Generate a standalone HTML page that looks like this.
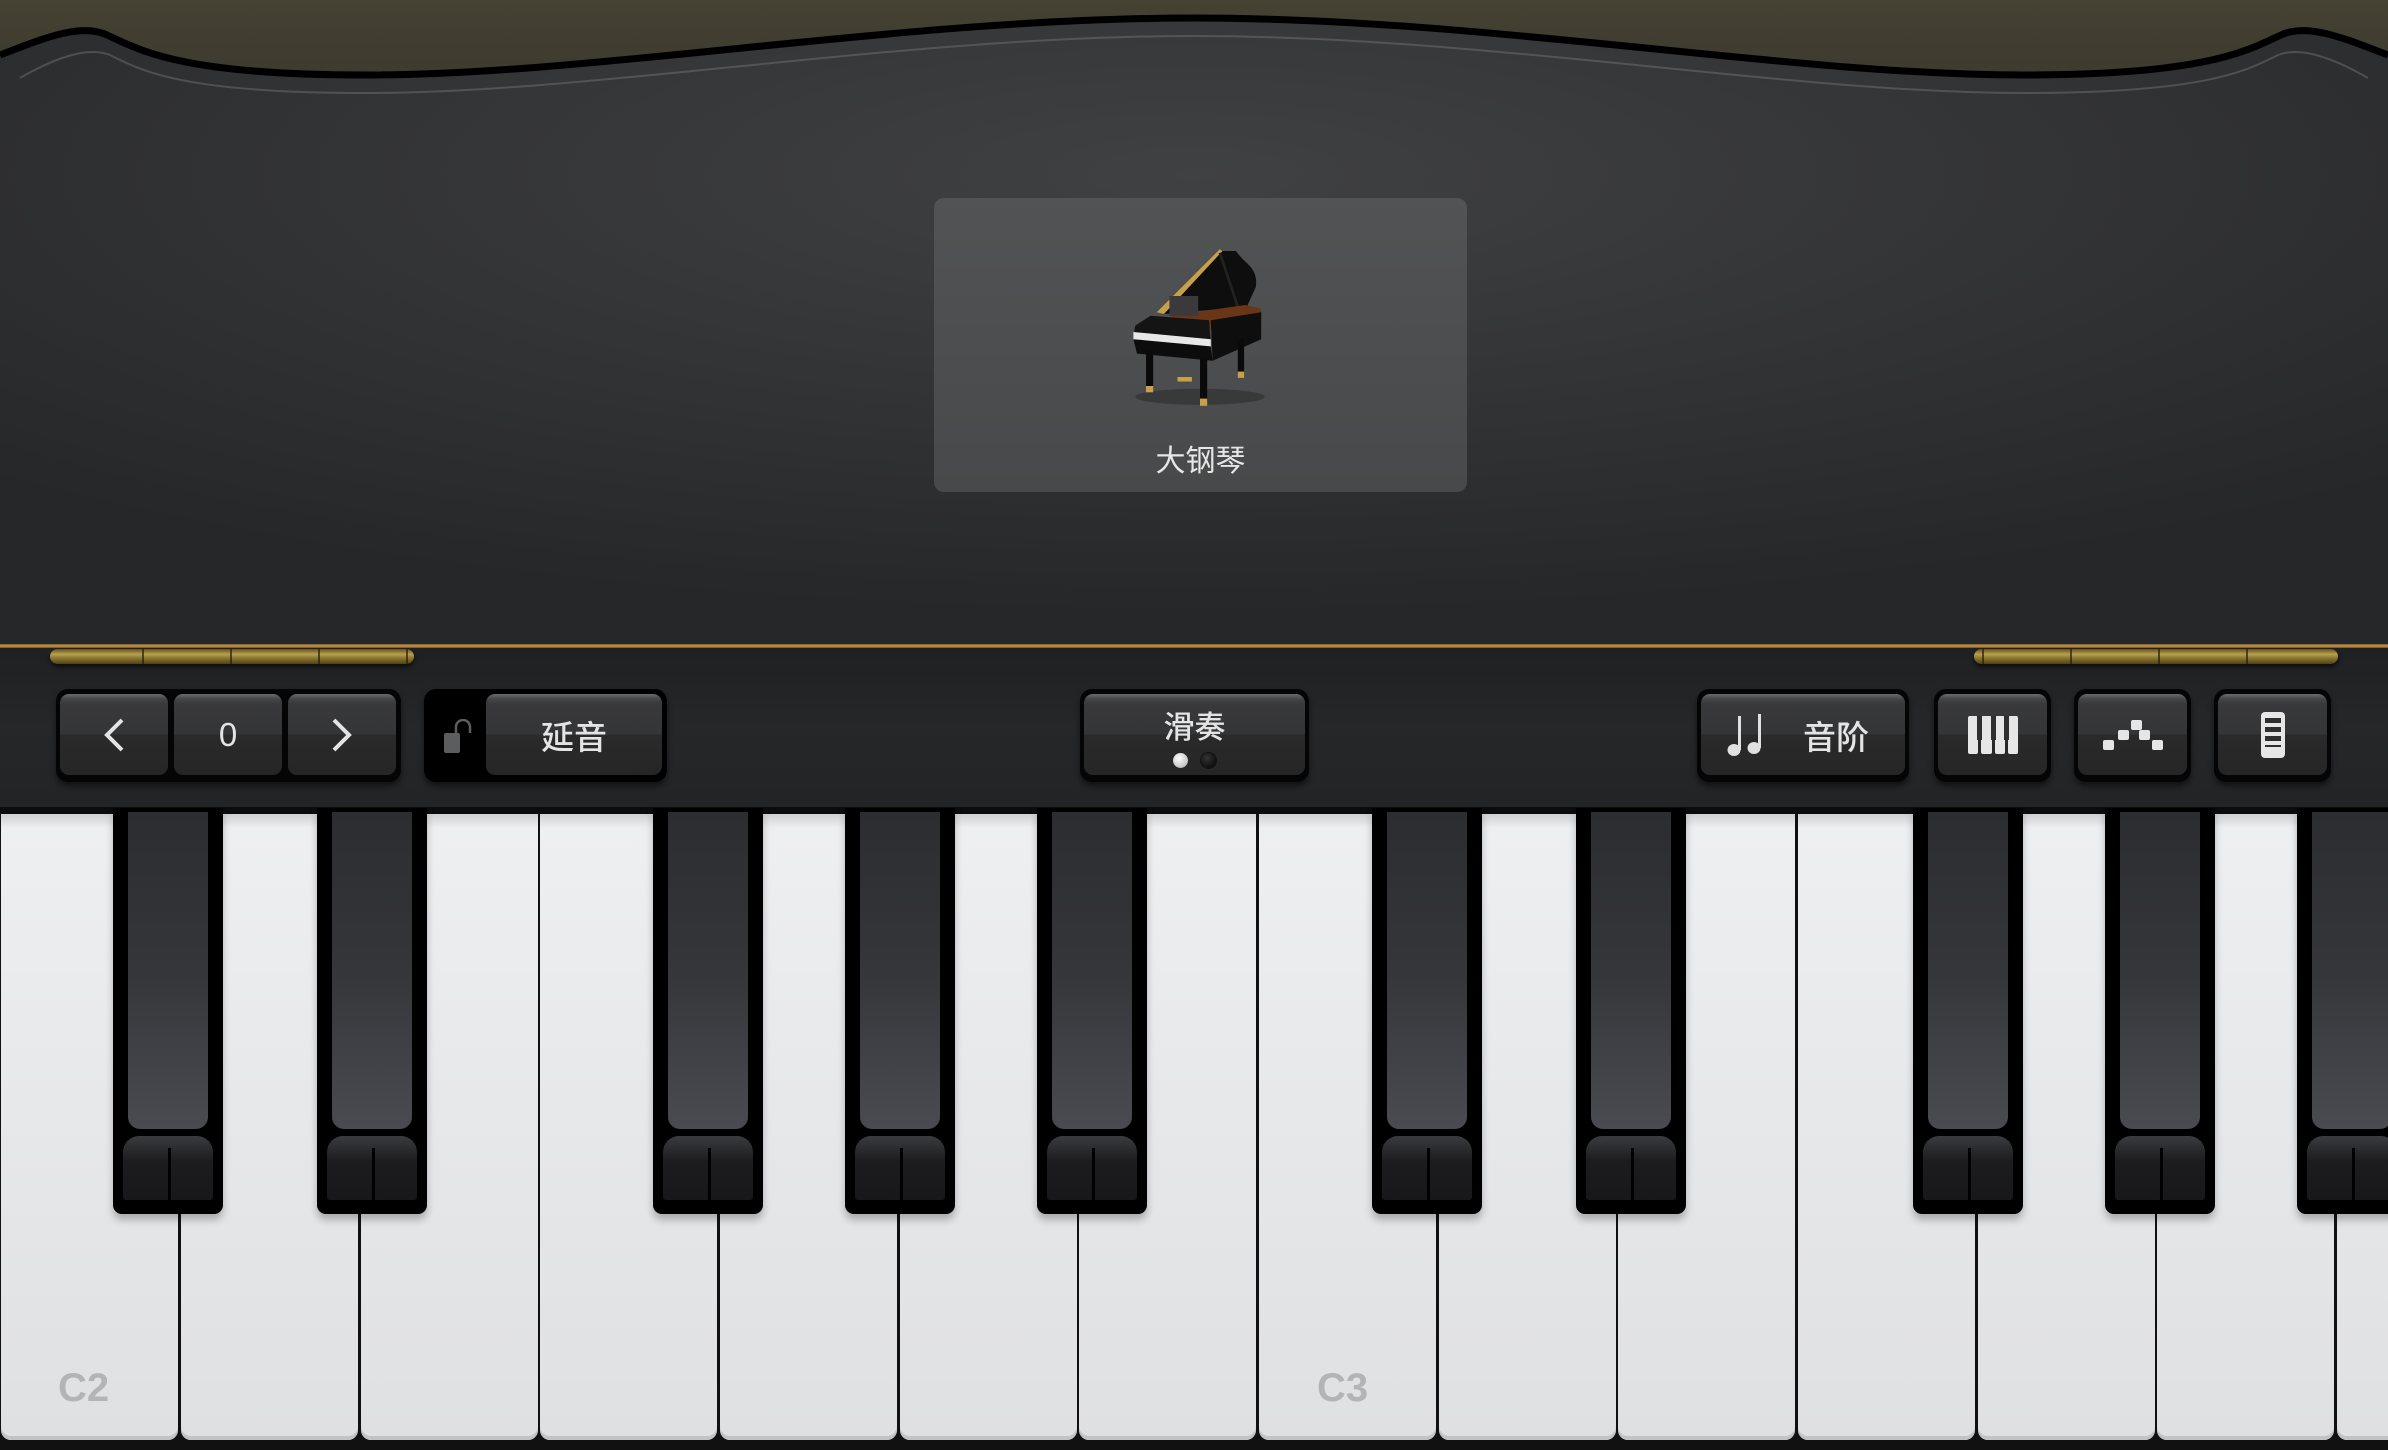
<!DOCTYPE html>
<html><head><meta charset="utf-8"><style>
*{margin:0;padding:0;box-sizing:border-box}
html,body{width:2388px;height:1450px;overflow:hidden;background:#111}
body{position:relative;font-family:"Liberation Sans","Noto Sans CJK SC",sans-serif}
.abs{position:absolute}
.card{left:934px;top:198px;width:533px;height:294px;border-radius:10px;background:linear-gradient(180deg,#525354,#48494a);}
.bar{top:807px;left:0;width:2388px;height:7px;background:#0c0c0d}
.toolbar{left:0;top:646px;width:2388px;height:161px;background:linear-gradient(180deg,#1f2022 0%,#262729 50%,#232426 100%)}
.gold{left:0;top:644px;width:2388px;height:4px;background:linear-gradient(180deg,#7a5a2a,#c99a4f,#6b4c22)}
.hinge{top:649px;height:15px;border-radius:8px;background:linear-gradient(180deg,#5f5221 0%,#b9a04e 35%,#8d7832 60%,#4d4118 100%);box-shadow:0 3px 5px rgba(0,0,0,.6)}
.hinge i{position:absolute;top:0;bottom:0;width:2px;background:rgba(40,30,10,.7)}
.grp{top:689px;height:93px;background:#050505;border-radius:12px;box-shadow:0 4px 6px rgba(0,0,0,.5)}
.btn{position:absolute;top:5px;bottom:7px;border-radius:9px;background:linear-gradient(180deg,#6a6b6c 0px,#444546 5px,#39393b 10px,#343536 50%,#2a2a2b 50%,#262627 100%);color:#e4e4e4;font-size:33px;font-weight:500;display:flex;align-items:center;justify-content:center}
.white{top:814px;width:177px;height:626px;border-radius:0 0 10px 10px;background:linear-gradient(180deg,#cfd0d2 0px,#eeeff0 14px,#e8e9eb 40%,#dfe0e2 100%);box-shadow:inset 0 -4px 0 #c2c3c5}
.black{top:808px;width:110px;height:406px;background:#000;border-radius:0 0 9px 9px;box-shadow:0 6px 8px rgba(0,0,0,.25)}
.black .f{position:absolute;left:15px;right:15px;top:4px;height:317px;border-radius:0 0 12px 12px;background:linear-gradient(180deg,#2c2d30,#35363a 50%,#4a4b50)}
.black .l{position:absolute;left:10px;right:10px;top:328px;height:64px;border-radius:16px 16px 3px 3px;background:linear-gradient(180deg,#3a3b3e,#1c1c1f 40%,#18181a)}
.black .l:after{content:"";position:absolute;left:50%;top:12px;bottom:0;width:3px;background:#000}
.lbl{top:1366px;font-size:40px;font-weight:bold;color:#b3b4b6}
</style></head><body>
<svg class="abs" style="left:0;top:0" width="2388" height="646">
<defs>
<radialGradient id="bg" cx="0.5" cy="0.25" r="0.7"><stop offset="0" stop-color="#404143"/><stop offset="1" stop-color="#262729"/></radialGradient>
<linearGradient id="ol" x1="0" y1="0" x2="0" y2="1"><stop offset="0" stop-color="#454233"/><stop offset="1" stop-color="#38362c"/></linearGradient>
</defs>
<rect width="2388" height="120" fill="url(#ol)"/>
<path d="M0,55 C40,40 80,22 107,35 C140,50 180,75 365,75 C600,75 900,18 1194,18 C1488,18 1788,75 2023,75 C2208,75 2248,50 2281,35 C2308,22 2348,40 2388,55 L2388,646 L0,646 Z" fill="url(#bg)"/>
<path d="M0,55 C40,40 80,22 107,35 C140,50 180,75 365,75 C600,75 900,18 1194,18 C1488,18 1788,75 2023,75 C2208,75 2248,50 2281,35 C2308,22 2348,40 2388,55" fill="none" stroke="#000" stroke-width="7"/>
<path d="M20,78 C60,55 90,47 110,55 C140,70 180,93 365,93 C600,93 900,36 1194,36 C1488,36 1788,93 2023,93 C2208,93 2248,70 2278,55 C2298,47 2328,55 2368,78" fill="none" stroke="#77787a" stroke-width="2" opacity=".45"/>
</svg>
<div class="abs card"></div>
<svg class="abs" style="left:1110px;top:228px" width="180" height="190" viewBox="0 0 200 200">
<ellipse cx="100" cy="182" rx="72" ry="9" fill="rgba(0,0,0,.25)"/>
<path d="M52,88 L122,18 L127,22 L60,90 Z" fill="#c9a04a"/>
<path d="M60,90 L125,20 L140,20 C150,35 165,38 162,60 L152,82 Z" fill="#0e0e0e"/>
<path d="M122,22 L148,100" stroke="#222" stroke-width="3"/>
<path d="M68,92 L150,80 L168,84 L168,100 L80,110 Z" fill="#6b3518"/>
<rect x="66" y="70" width="32" height="22" fill="#3a3a3c"/>
<path d="M45,92 L110,97 L112,123 L26,115 L28,103 Z" fill="#141414"/>
<path d="M26,110 L112,118 L112,127 L26,119 Z" fill="#e8e8e8"/>
<path d="M26,118 L112,126 L114,142 L30,134 Z" fill="#0c0c0c"/>
<path d="M112,97 L168,88 L168,118 L114,142 Z" fill="#0e0e0e"/>
<rect x="40" y="130" width="8" height="42" fill="#0a0a0a"/><rect x="40" y="170" width="8" height="7" fill="#c9a04a"/>
<rect x="100" y="140" width="8" height="46" fill="#0a0a0a"/><rect x="100" y="184" width="8" height="8" fill="#c9a04a"/>
<rect x="142" y="118" width="7" height="38" fill="#0a0a0a"/><rect x="142" y="154" width="7" height="7" fill="#c9a04a"/>
<rect x="75" y="160" width="16" height="5" fill="#c9a04a"/>
</svg>
<div class="abs" style="left:934px;top:436px;width:533px;text-align:center;color:#e6e6e6;font-size:30px">大钢琴</div>
<div class="abs toolbar"></div>
<div class="abs gold"></div>
<div class="abs hinge" style="left:50px;width:364px"><i style="left:92px"></i><i style="left:180px"></i><i style="left:268px"></i><i style="left:356px"></i></div>
<div class="abs hinge" style="left:1974px;width:364px"><i style="left:8px"></i><i style="left:96px"></i><i style="left:184px"></i><i style="left:272px"></i></div>
<div class="abs grp" style="left:56px;width:345px">
 <div class="btn" style="left:4px;width:108px"><svg width="24" height="36"><path d="M20,3 L5,18 L20,33" fill="none" stroke="#e4e4e4" stroke-width="4"/></svg></div>
 <div class="btn" style="left:118px;width:108px">0</div>
 <div class="btn" style="left:232px;width:108px"><svg width="24" height="36"><path d="M4,3 L19,18 L4,33" fill="none" stroke="#e4e4e4" stroke-width="4"/></svg></div>
</div>
<div class="abs grp" style="left:424px;width:243px;background:#000">
 <svg class="abs" style="left:18px;top:30px" width="32" height="36"><rect x="2" y="14" width="16" height="20" rx="2" fill="#5c5d5e"/><path d="M14,14 V8 A7,7 0 0 1 28,8 V14" fill="none" stroke="#5c5d5e" stroke-width="2.5"/></svg>
 <div class="btn" style="left:62px;width:176px">延音</div>
</div>
<div class="abs grp" style="left:1080px;width:229px">
 <div class="btn" style="left:4px;right:4px;flex-direction:column;justify-content:flex-start;padding-top:8px">
  <span style="font-size:31px">滑奏</span>
  <span style="display:flex;gap:13px;margin-top:6px"><i style="width:15px;height:15px;border-radius:50%;background:radial-gradient(circle at 40% 35%,#fff,#aaa)"></i><i style="width:15px;height:15px;border-radius:50%;background:radial-gradient(circle at 40% 35%,#333,#000);box-shadow:0 0 0 1px #111"></i></span>
 </div>
</div>
<div class="abs grp" style="left:1697px;width:212px">
 <div class="btn" style="left:4px;right:4px;justify-content:flex-start;padding-left:26px"><svg width="40" height="44"><g fill="#e0e0e0"><ellipse cx="7" cy="37" rx="6.5" ry="6"/><rect x="11" y="3" width="3" height="34"/><ellipse cx="27" cy="35" rx="6.5" ry="6"/><rect x="31" y="1" width="3" height="34"/></g></svg><span style="margin-left:36px">音阶</span></div>
</div>
<div class="abs grp" style="left:1934px;width:117px">
 <div class="btn" style="left:4px;right:4px"><svg width="50" height="38"><g fill="#e6e6e6"><rect x="0" y="0" width="10" height="38" rx="2"/><rect x="13" y="0" width="11" height="38" rx="2"/><rect x="27" y="0" width="10" height="38" rx="2"/><rect x="40" y="0" width="10" height="38" rx="2"/></g><g fill="#2f2f30"><rect x="9" y="0" width="5" height="24"/><rect x="23" y="0" width="5" height="24"/><rect x="36" y="0" width="5" height="24"/></g></svg></div>
</div>
<div class="abs grp" style="left:2074px;width:117px">
 <div class="btn" style="left:4px;right:4px"><svg width="60" height="30"><g fill="#e6e6e6"><rect x="0" y="20" width="11" height="10" rx="2"/><rect x="15" y="10" width="11" height="10" rx="2"/><rect x="28" y="0" width="11" height="10" rx="2"/><rect x="36" y="10" width="11" height="10" rx="2"/><rect x="49" y="20" width="11" height="10" rx="2"/></g></svg></div>
</div>
<div class="abs grp" style="left:2214px;width:117px">
 <div class="btn" style="left:4px;right:4px"><svg width="24" height="46"><rect x="0" y="0" width="24" height="46" rx="4" fill="#e6e6e6"/><g fill="#2f2f30"><rect x="4" y="6" width="16" height="5"/><rect x="4" y="15" width="16" height="5"/><rect x="4" y="24" width="16" height="5"/><rect x="4" y="33" width="16" height="2"/></g></svg></div>
</div>
<div class="abs bar"></div>
<div class="abs white" style="left:1px"></div>
<div class="abs white" style="left:181px"></div>
<div class="abs white" style="left:361px"></div>
<div class="abs white" style="left:540px"></div>
<div class="abs white" style="left:720px"></div>
<div class="abs white" style="left:900px"></div>
<div class="abs white" style="left:1079px"></div>
<div class="abs white" style="left:1259px"></div>
<div class="abs white" style="left:1439px"></div>
<div class="abs white" style="left:1618px"></div>
<div class="abs white" style="left:1798px"></div>
<div class="abs white" style="left:1978px"></div>
<div class="abs white" style="left:2157px"></div>
<div class="abs white" style="left:2337px"></div>
<div class="abs black" style="left:113px"><div class="f"></div><div class="l"></div></div>
<div class="abs black" style="left:317px"><div class="f"></div><div class="l"></div></div>
<div class="abs black" style="left:653px"><div class="f"></div><div class="l"></div></div>
<div class="abs black" style="left:845px"><div class="f"></div><div class="l"></div></div>
<div class="abs black" style="left:1037px"><div class="f"></div><div class="l"></div></div>
<div class="abs black" style="left:1372px"><div class="f"></div><div class="l"></div></div>
<div class="abs black" style="left:1576px"><div class="f"></div><div class="l"></div></div>
<div class="abs black" style="left:1913px"><div class="f"></div><div class="l"></div></div>
<div class="abs black" style="left:2105px"><div class="f"></div><div class="l"></div></div>
<div class="abs black" style="left:2297px"><div class="f"></div><div class="l"></div></div>
<div class="abs lbl" style="left:58px">C2</div>
<div class="abs lbl" style="left:1317px">C3</div>
</body></html>
